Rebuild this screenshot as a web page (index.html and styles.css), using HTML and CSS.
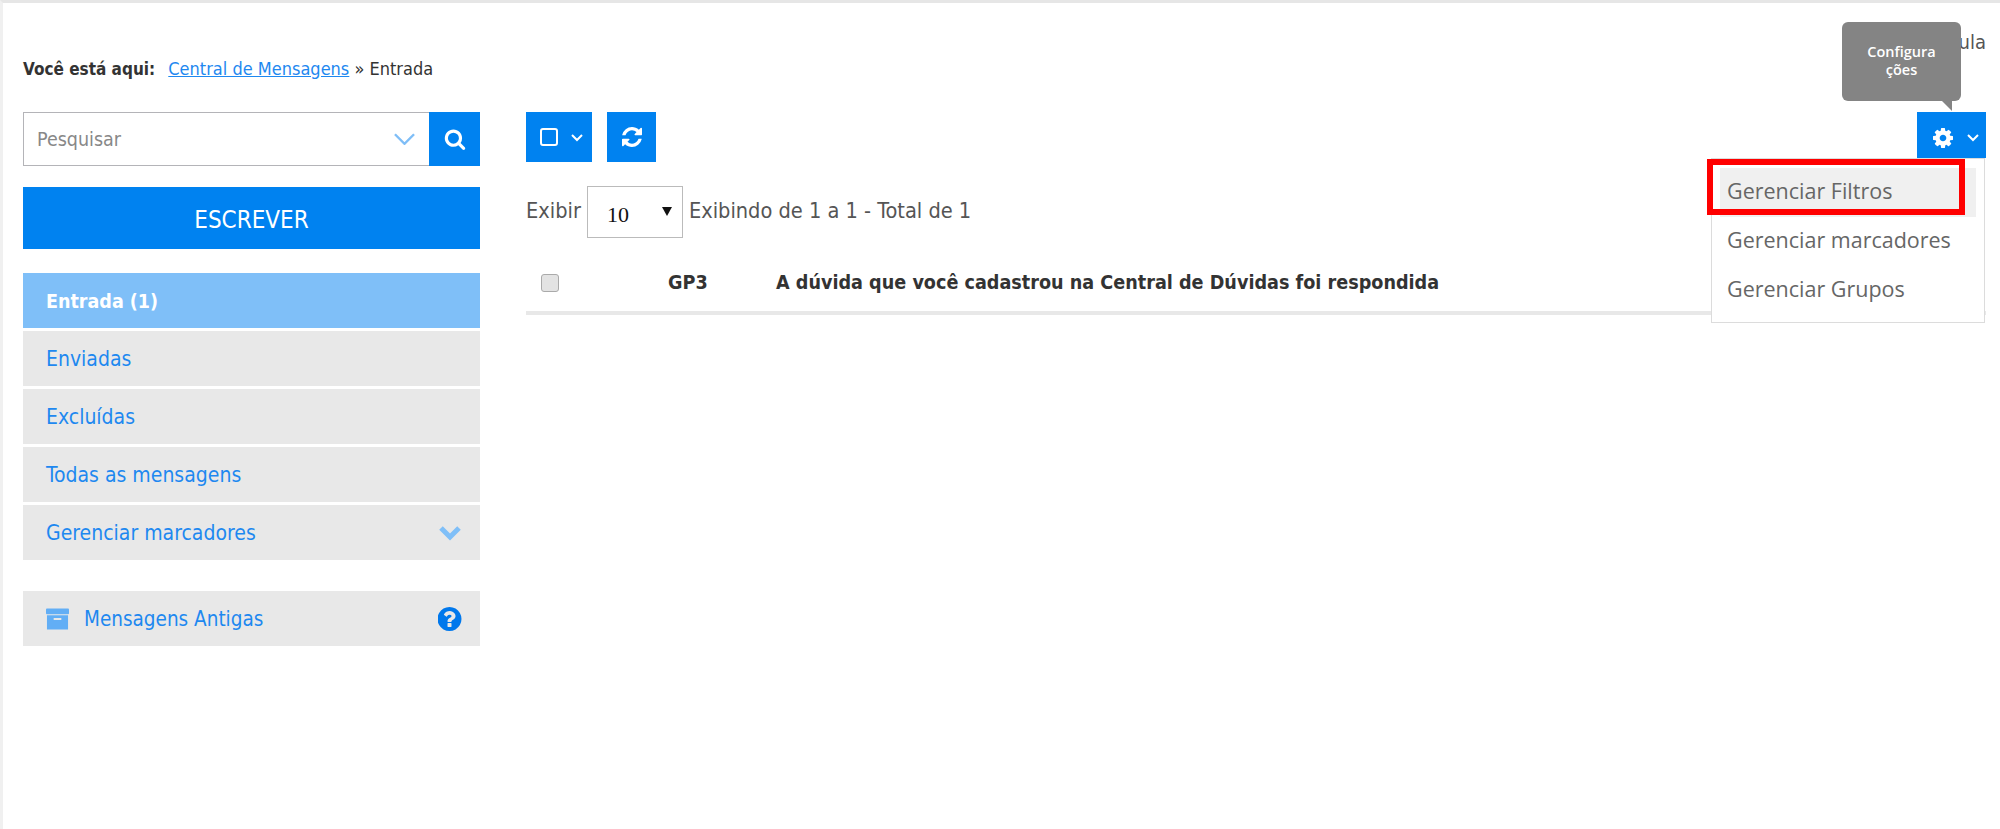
FILE: index.html
```html
<!DOCTYPE html>
<html>
  <head>
    <meta charset="utf-8">
    <title>Central de Mensagens</title>
    <link rel="stylesheet" href="styles.css">
  </head>
  <body>
    <div class="page">
      <div class="topline"><span class="cut-text">ula</span></div>

      <p class="breadcrumb">
        <strong>Você está aqui:</strong>
        <a href="#">Central de Mensagens</a> <span class="crumb-sep">»</span> Entrada
      </p>

      <div class="layout">
        <!-- coluna da esquerda -->
        <aside class="sidebar">
          <form class="search">
            <div class="search-field">
              <input class="search-input" type="text" placeholder="Pesquisar">
              <svg class="search-arrow" viewBox="0 0 22 12"><polyline points="1,1 11,11 21,1"/></svg>
            </div>
            <button class="search-btn" type="button">
              <svg viewBox="0 0 1792 1792"><path d="M1216 832q0-185-131.500-316.500t-316.500-131.500-316.500 131.500-131.500 316.500 131.500 316.500 316.500 131.500 316.500-131.500 131.500-316.500zm512 832q0 52-38 90t-90 38q-54 0-90-38l-343-342q-179 124-399 124-143 0-273.500-55.500t-225-150-150-225-55.500-273.500 55.500-273.500 150-225 225-150 273.500-55.500 273.500 55.500 225 150 150 225 55.500 273.500q0 220-124 399l343 343q37 37 37 90z"/></svg>
            </button>
          </form>

          <a class="compose" href="#">ESCREVER</a>

          <ul class="nav">
            <li class="nav-item active">Entrada (1)</li>
            <li class="nav-item">Enviadas</li>
            <li class="nav-item">Excluídas</li>
            <li class="nav-item">Todas as mensagens</li>
            <li class="nav-item">
              Gerenciar marcadores
              <svg class="nav-chevron" viewBox="0 0 24 16"><polyline points="3,3 12,12 21,3"/></svg>
            </li>
          </ul>

          <div class="nav-item old-messages">
            <svg class="archive-icon" viewBox="0 0 24 22">
              <rect x="0" y="0" width="24" height="6" rx="1"/>
              <path d="M1 7h22v15H1zM8 10v2h8v-2z" fill-rule="evenodd"/>
            </svg>
            Mensagens Antigas
            <svg class="help-icon" viewBox="192 128 1472 1536"><path d="M1024 1376v-192q0-14-9-23t-23-9h-192q-14 0-23 9t-9 23v192q0 14 9 23t23 9h192q14 0 23-9t9-23zm256-672q0-88-55.500-163t-138.500-116-170-41q-243 0-371 213-15 24 8 42l132 100q7 6 19 6 16 0 25-12 53-68 86-92 34-24 86-24 48 0 85.500 26t37.500 59q0 38-20 61t-68 45q-63 28-115.500 86.500t-52.500 125.500v36q0 14 9 23t23 9h192q14 0 23-9t9-23q0-19 21.500-49.500t54.500-49.500q32-18 49-28.500t46-35 44.500-48 28-60.500 12.500-81zm384 192q0 209-103 385.500t-279.500 279.500-385.500 103-385.500-103-279.500-279.500-103-385.500 103-385.500 279.500-279.500 385.500-103 385.500 103 279.500 279.500 103 385.500z"/></svg>
          </div>
        </aside>

        <!-- lista de mensagens -->
        <main class="content">
          <div class="toolbar">
            <button class="tool-btn select-btn" type="button">
              <span class="square"></span>
              <svg class="mini-chevron" viewBox="0 0 14 9"><polyline points="2,2 7,7 12,2"/></svg>
            </button>
            <button class="tool-btn refresh-btn" type="button">
              <svg viewBox="128 128 1536 1536"><path d="M1639 1056q0 5-1 7-64 268-268 434.500t-478 166.500q-146 0-282.500-55t-243.500-157l-129 129q-19 19-45 19t-45-19-19-45v-448q0-26 19-45t45-19h448q26 0 45 19t19 45-19 45l-137 137q71 66 161 102t187 36q134 0 250-65t186-179q11-17 53-117 8-23 30-23h192q13 0 22.500 9.500t9.500 22.500zm25-800v448q0 26-19 45t-45 19h-448q-26 0-45-19t-19-45 19-45l138-138q-148-137-349-137-134 0-250 65t-186 179q-11 17-53 117-8 23-30 23h-199q-13 0-22.500-9.500t-9.500-22.500v-7q65-268 270-434.500t480-166.500q146 0 284 55.500t245 156.500l130-129q19-19 45-19t45 19 19 45z"/></svg>
            </button>

            <div class="settings">
              <div class="tooltip">Configura<br>ções</div>
              <button class="tool-btn settings-btn" type="button">
                <svg class="gear" viewBox="128 128 1536 1536"><path d="M1152 896q0-106-75-181t-181-75-181 75-75 181 75 181 181 75 181-75 75-181zm512-109v222q0 12-8 23t-20 13l-185 28q-19 54-39 91 35 50 107 138 10 12 10 25t-9 23q-27 37-99 108t-94 71q-12 0-26-9l-138-108q-44 23-91 38-16 136-29 186-7 28-36 28h-222q-14 0-24.500-8.500t-11.500-21.500l-28-184q-49-16-90-37l-141 107q-10 9-25 9-14 0-25-11-126-114-165-168-7-10-7-23 0-12 8-23 15-21 51-66.500t54-70.500q-27-50-41-99l-183-27q-13-2-21-12.500t-8-23.500v-222q0-12 8-23t19-13l186-28q14-46 39-92-40-57-107-138-10-12-10-24 0-10 9-23 26-36 98.500-107.500t94.500-71.500q13 0 26 10l138 107q44-23 91-38 16-136 29-186 7-28 36-28h222q14 0 24.500 8.500t11.500 21.500l28 184q49 16 90 37l142-107q9-9 24-9 13 0 25 10 129 119 165 170 7 8 7 22 0 12-8 23-15 21-51 66.500t-54 70.500q26 50 41 98l183 28q13 2 21 12.500t8 23.500z"/></svg>
                <svg class="mini-chevron" viewBox="0 0 14 9"><polyline points="2,2 7,7 12,2"/></svg>
              </button>
              <ul class="dropdown">
                <li class="dropdown-item hover">Gerenciar Filtros</li>
                <li class="dropdown-item">Gerenciar marcadores</li>
                <li class="dropdown-item">Gerenciar Grupos</li>
              </ul>
              <div class="red-mark"></div>
            </div>
          </div>

          <div class="pager">
            <label for="perpage">Exibir</label>
            <div class="select-wrap">
              <select id="perpage" class="perpage"><option>10</option><option>25</option></select>
            </div>
            <span>Exibindo de 1 a 1 - Total de 1</span>
          </div>

          <div class="message-row">
            <input class="row-check" type="checkbox">
            <span class="row-from">GP3</span>
            <span class="row-subject">A dúvida que você cadastrou na Central de Dúvidas foi respondida</span>
          </div>
        </main>
      </div>
    </div>
  </body>
</html>
```

FILE: styles.css
```css
* {
  box-sizing: border-box;
}
html, body {
  margin: 0;
  height: 100%;
  background: #fff;
}
body {
  font-family: "DejaVu Sans Condensed", "DejaVu Sans", sans-serif;
  font-size: 17px;
  color: #444;
  overflow: hidden;
}
svg {
  display: block;
}
.page {
  height: 829px;
  border-top: 3px solid #e6e6e6;
  border-left: 3px solid #f0f0f0;
  padding: 0 14px 0 20px;
}
.topline {
  height: 55px;
  padding-top: 27px;
  text-align: right;
  font-size: 20px;
  line-height: 24px;
  color: #555;
}
.breadcrumb {
  margin: 0;
  height: 54px;
  font-size: 18px;
  line-height: 22px;
  color: #333;
}
.breadcrumb strong {
  font-size: 17px;
  margin-right: 8px;
}
.breadcrumb a {
  color: #1e88f0;
}

/* sidebar */
.layout {
  display: flex;
  align-items: flex-start;
}
.sidebar {
  width: 457px;
  flex: none;
}
.search {
  display: flex;
  height: 54px;
}
.search-field {
  flex: 1;
  display: flex;
  align-items: center;
  border: 1px solid #b4b4b8;
  border-right: none;
  padding-right: 14px;
}
.search-input {
  flex: 1;
  min-width: 0;
  border: none;
  outline: none;
  font: inherit;
  font-size: 19.5px;
  padding: 0 13px;
  background: transparent;
}
.search-input::placeholder {
  color: #888;
}
.search-arrow {
  width: 21px;
  height: 12px;
  fill: none;
  stroke: #7fbef7;
  stroke-width: 2.5;
}
.search-btn {
  width: 51px;
  border: none;
  padding: 0;
  background: #0082f0;
  display: flex;
  align-items: center;
  justify-content: center;
}
.search-btn svg {
  width: 22px;
  height: 22px;
  fill: #fff;
}
.compose {
  display: block;
  margin-top: 21px;
  height: 62px;
  line-height: 66px;
  background: #0082f0;
  color: #fff;
  text-align: center;
  font-size: 24px;
  text-decoration: none;
}
.nav {
  list-style: none;
  margin: 24px 0 0;
  padding: 0;
}
.nav-item {
  display: flex;
  align-items: center;
  height: 55px;
  margin-bottom: 3px;
  padding: 1px 18px 0 23px;
  background: #e8e8e8;
  color: #1e88f0;
  font-size: 21px;
}
.nav-item.active {
  background: #7fbff8;
  color: #fff;
  font-weight: bold;
  font-size: 19.5px;
}
.nav-chevron {
  margin-left: auto;
  width: 24px;
  height: 16px;
  fill: none;
  stroke: #7fbff8;
  stroke-width: 5;
}
.old-messages {
  margin-top: 31px;
  font-size: 20.5px;
}
.archive-icon {
  width: 23px;
  height: 22px;
  fill: #62aef5;
  margin-right: 15px;
}
.help-icon {
  margin-left: auto;
  width: 24px;
  height: 24px;
  fill: #0078ec;
}

/* conteudo */
.content {
  flex: 1;
  padding-left: 46px;
  position: relative;
}
.toolbar {
  display: flex;
  gap: 15px;
  align-items: flex-start;
}
.tool-btn {
  display: flex;
  align-items: center;
  height: 50px;
  border: none;
  padding: 0;
  background: #0082f0;
}
.select-btn {
  width: 66px;
  gap: 12px;
  padding-left: 14px;
}
.refresh-btn {
  width: 49px;
  justify-content: center;
}
.refresh-btn svg {
  width: 20px;
  height: 20px;
  fill: #fff;
}
.square {
  width: 18px;
  height: 18px;
  border: 2px solid #fff;
  border-radius: 3px;
}
.mini-chevron {
  width: 14px;
  height: 9px;
  fill: none;
  stroke: #fff;
  stroke-width: 2;
}
.settings {
  margin-left: auto;
  position: relative;
}
.settings-btn {
  width: 69px;
  height: 46px;
  gap: 13px;
  padding: 5px 0 0 16px;
}
.gear {
  width: 20px;
  height: 20px;
  fill: #fff;
}
.tooltip {
  position: absolute;
  left: -75px;
  top: -90px;
  width: 119px;
  height: 79px;
  padding-top: 21px;
  border-radius: 6px;
  background: #848484;
  color: #fff;
  font-family: "Open Sans", sans-serif;
  font-size: 14.5px;
  line-height: 18px;
  font-weight: 600;
  text-align: center;
}
.tooltip::after {
  content: "";
  position: absolute;
  right: 9px;
  bottom: -10px;
  border-top: 10px solid #848484;
  border-left: 10px solid transparent;
}
.dropdown {
  position: absolute;
  right: 1px;
  top: 46px;
  width: 274px;
  height: 165px;
  margin: 0;
  padding: 9px 8px;
  list-style: none;
  background: #fff;
  border: 1px solid #dcdcdc;
  font-family: "Open Sans", sans-serif;
  font-size: 21.5px;
  color: #666;
}
.dropdown-item {
  height: 49px;
  line-height: 45px;
  padding-left: 7px;
  white-space: nowrap;
}
.dropdown-item.hover {
  background: #f0f0f0;
}
.red-mark {
  position: absolute;
  left: -210px;
  top: 47px;
  width: 258px;
  height: 56px;
  border: 6px solid #f00;
}
.pager {
  display: flex;
  align-items: center;
  gap: 6px;
  margin-top: 24px;
  height: 52px;
  font-size: 21.6px;
  color: #555;
}
.pager label, .pager span {
  margin-top: -3px;
}
.select-wrap {
  position: relative;
}
.select-wrap::after {
  content: "";
  position: absolute;
  right: 11px;
  top: 21px;
  border-top: 9px solid #111;
  border-left: 5px solid transparent;
  border-right: 5px solid transparent;
  pointer-events: none;
}
.perpage {
  appearance: none;
  width: 96px;
  height: 52px;
  padding: 4px 0 0 19px;
  border: 1px solid #bbb;
  border-radius: 0;
  background: #fff;
  font-family: "Liberation Serif", serif;
  font-size: 22px;
  color: #111;
}
.message-row {
  display: flex;
  align-items: center;
  height: 77px;
  border-bottom: 4px solid #e8e8e8;
  padding-top: 16px;
  font-weight: bold;
  font-size: 19.6px;
  color: #333;
}
.row-check {
  appearance: none;
  margin: 0 0 0 15px;
  width: 18px;
  height: 18px;
  background: #e3e3e3;
  border: 1px solid #aaa;
  border-radius: 3px;
}
.row-from {
  margin-left: 109px;
  width: 108px;
}
```
